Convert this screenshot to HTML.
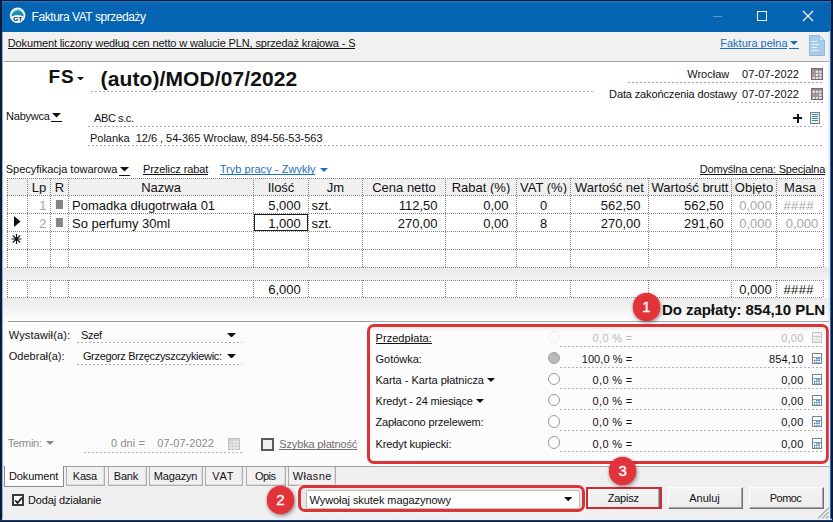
<!DOCTYPE html>
<html><head><meta charset="utf-8"><title>Faktura VAT sprzedaży</title><style>
html,body{margin:0;padding:0}
body{width:833px;height:522px;position:relative;overflow:hidden;background:#f0f0f0;font-family:"Liberation Sans",sans-serif}
body>div,body>span,body>svg{position:absolute;display:block}
.t{white-space:pre;line-height:1}
.hd{height:1px;background:repeating-linear-gradient(90deg,var(--c) 0 2px,transparent 2px 4px)}
.vd{width:1px;background:repeating-linear-gradient(180deg,var(--c) 0 1px,transparent 1px 2px)}
.hdd{height:1px;background:repeating-linear-gradient(90deg,var(--c) 0 1px,transparent 1px 2px)}
</style></head><body>
<div style="left:0px;top:0px;width:833px;height:522px;background:#f0f0f0"></div>
<div style="left:0px;top:0px;width:833px;height:31.5px;background:linear-gradient(#2a78bf 1px,#0f6ab8 2.5px,#0565b3 4px)"></div>
<div style="left:2px;top:31.5px;width:828px;height:29.5px;background:#f1f1f1"></div>
<div style="left:2px;top:61px;width:828px;height:1px;background:#a5a5a5"></div>
<div style="left:2px;top:62px;width:828px;height:205px;background:#fff"></div>
<div style="left:2px;top:267px;width:828px;height:13px;background:linear-gradient(#eaeaea,#f1f1f1)"></div>
<div style="left:2px;top:280px;width:828px;height:18px;background:#fff"></div>
<div style="left:2px;top:298px;width:828px;height:23px;background:linear-gradient(#ebebeb,#fdfdfd)"></div>
<div style="left:8px;top:321px;width:821px;height:1px;background:#9c9c9c"></div>
<div style="left:2px;top:322px;width:828px;height:145px;background:#fcfcfc"></div>
<svg style="left:9px;top:7px" width="17" height="17" viewBox="0 0 17 17"><circle cx="8.6" cy="8.3" r="7.8" fill="#f2f9fc"/><path d="M2.3 9.6A6.3 6.3 0 0 1 14.9 9.6Q8.6 6.6 2.3 9.6Z" fill="#1d8fb0"/><path d="M3.4 6.4A6.3 6.3 0 0 1 12.6 3.6Q7.6 3.4 3.4 6.4Z" fill="#49b9cf"/><text x="3.9" y="13.7" font-family="Liberation Sans" font-weight="bold" font-size="5.9" textLength="9.6" lengthAdjust="spacingAndGlyphs" fill="#16233a">GT</text></svg>
<span class="t" id="t11" style="top:10.74px;font-size:12px;color:#fff;letter-spacing:-0.450px;left:31.599999999999998px;">Faktura VAT sprzedaży</span>
<div style="left:713px;top:16px;width:9px;height:1px;background:#5b95cc"></div>
<div style="left:757px;top:11px;width:10px;height:10px;border:1px solid #fff;box-sizing:border-box"></div>
<svg style="left:802px;top:10px" width="12" height="12" viewBox="0 0 12 12"><path d="M1 1L11 11M11 1L1 11" stroke="#fff" stroke-width="1.2" fill="none"/></svg>
<span class="t" id="t15" style="top:38.00px;font-size:11px;color:#111;letter-spacing:-0.138px;left:7.8px;">Dokument liczony według cen netto w walucie PLN, sprzedaż krajowa - S</span>
<span class="t" id="t16" style="top:38.00px;font-size:11px;color:#1c6fb8;letter-spacing:-0.005px;left:720.3px;">Faktura pełna</span>
<svg style="left:790px;top:41px" width="8" height="4" viewBox="0 0 8 4"><path d="M0 0H8L4.0 4Z" fill="#1c6fb8"/></svg>
<div style="left:789px;top:48px;width:10px;height:1px;background:#1c6fb8"></div>
<svg style="left:808px;top:34px" width="18" height="23" viewBox="0 0 18 23"><path d="M1.5 1.5H11.5L16.5 6.5V21.5H1.5Z" fill="#a9cbea" stroke="#8fb8df" stroke-width="1"/><path d="M11.5 1.5V6.5H16.5Z" fill="#d5e6f5" stroke="#8fb8df" stroke-width=".8"/><path d="M3.5 7.5H9M3.5 10.5H11M3.5 13.5H9M3.5 16.5H11" stroke="#eaf3fb" stroke-width="1.2"/></svg>
<span class="t" id="t20" style="top:67.42px;font-size:19px;color:#111;font-weight:bold;letter-spacing:0.919px;left:48.5px;">FS</span>
<svg style="left:77px;top:76.5px" width="7" height="3.5" viewBox="0 0 7 3.5"><path d="M0 0H7L3.5 3.5Z" fill="#111"/></svg>
<span class="t" id="t22" style="top:68.02px;font-size:21px;color:#111;font-weight:bold;letter-spacing:0.101px;left:100.6px;">(auto)/MOD/07/2022</span>
<div class="hd" style="left:91px;top:91px;width:503px;--c:#acacac"></div>
<span class="t" id="t24" style="top:69.00px;font-size:11px;color:#111;letter-spacing:-0.014px;left:687.3px;">Wrocław</span>
<span class="t" id="t25" style="top:69.00px;font-size:11px;color:#111;letter-spacing:0.080px;left:742.0px;">07-07-2022</span>
<div class="hd" style="left:628px;top:82px;width:196px;--c:#acacac"></div>
<span class="t" id="t27" style="top:89.00px;font-size:11px;color:#111;letter-spacing:-0.129px;left:609.0999999999999px;">Data zakończenia dostawy</span>
<span class="t" id="t28" style="top:89.00px;font-size:11px;color:#111;letter-spacing:0.080px;left:742.0px;">07-07-2022</span>
<div class="hd" style="left:737px;top:102px;width:87px;--c:#acacac"></div>
<svg style="left:811px;top:68px" width="12" height="12" viewBox="0 0 12 12"><rect x=".5" y=".5" width="11" height="11" fill="#8f8f8f" stroke="#6e6e6e"/><rect x="1.6" y="2.70" width="2.3" height="2.1" fill="#d29a74"/><rect x="1.6" y="5.75" width="2.3" height="2.1" fill="#d29a74"/><rect x="1.6" y="8.80" width="2.3" height="2.1" fill="#e7e7e7"/><rect x="4.9" y="2.70" width="2.3" height="2.1" fill="#e7e7e7"/><rect x="4.9" y="5.75" width="2.3" height="2.1" fill="#e7e7e7"/><rect x="4.9" y="8.80" width="2.3" height="2.1" fill="#e7e7e7"/><rect x="8.2" y="2.70" width="2.3" height="2.1" fill="#e7e7e7"/><rect x="8.2" y="5.75" width="2.3" height="2.1" fill="#e7e7e7"/><rect x="8.2" y="8.80" width="2.3" height="2.1" fill="#e7e7e7"/></svg>
<svg style="left:811px;top:88px" width="12" height="12" viewBox="0 0 12 12"><rect x=".5" y=".5" width="11" height="11" fill="#8f8f8f" stroke="#6e6e6e"/><rect x="1.6" y="2.70" width="2.3" height="2.1" fill="#e7e7e7"/><rect x="1.6" y="5.75" width="2.3" height="2.1" fill="#d38d8d"/><rect x="1.6" y="8.80" width="2.3" height="2.1" fill="#e7e7e7"/><rect x="4.9" y="2.70" width="2.3" height="2.1" fill="#e7e7e7"/><rect x="4.9" y="5.75" width="2.3" height="2.1" fill="#d38d8d"/><rect x="4.9" y="8.80" width="2.3" height="2.1" fill="#e7e7e7"/><rect x="8.2" y="2.70" width="2.3" height="2.1" fill="#e7e7e7"/><rect x="8.2" y="5.75" width="2.3" height="2.1" fill="#e7e7e7"/><rect x="8.2" y="8.80" width="2.3" height="2.1" fill="#e7e7e7"/></svg>
<span class="t" id="t32" style="top:111.00px;font-size:11px;color:#111;letter-spacing:-0.225px;left:6.1px;">Nabywca</span>
<svg style="left:52px;top:113px" width="9" height="4.5" viewBox="0 0 9 4.5"><path d="M0 0H9L4.5 4.5Z" fill="#111"/></svg>
<div style="left:51px;top:121px;width:11px;height:1px;background:#111"></div>
<span class="t" id="t35" style="top:113.00px;font-size:11px;color:#111;letter-spacing:-0.414px;left:94.1px;">ABC s.c.</span>
<div class="hd" style="left:88px;top:126px;width:736px;--c:#acacac"></div>
<span class="t" id="t37" style="top:133.00px;font-size:11px;color:#111;letter-spacing:-0.020px;left:90.0px;">Polanka  12/6 , 54-365 Wrocław, 894-56-53-563</span>
<div class="hd" style="left:88px;top:145px;width:736px;--c:#acacac"></div>
<div style="left:793px;top:117px;width:9px;height:2px;background:#111"></div>
<div style="left:796.5px;top:113.5px;width:2px;height:9px;background:#111"></div>
<svg style="left:810px;top:112px" width="10" height="12" viewBox="0 0 10 12"><rect x=".5" y=".5" width="9" height="11" fill="#eef1f3" stroke="#7c7c7c"/><path d="M2 2.5H8M2 4.5H8M2 6.5H8M2 8.5H8" stroke="#3d86a3" stroke-width="1"/></svg>
<span class="t" id="t42" style="top:164.00px;font-size:11px;color:#111;letter-spacing:-0.020px;left:5.8px;">Specyfikacja towarowa</span>
<svg style="left:119.5px;top:167px" width="9" height="4.5" viewBox="0 0 9 4.5"><path d="M0 0H9L4.5 4.5Z" fill="#111"/></svg>
<div style="left:118.5px;top:175px;width:11px;height:1px;background:#111"></div>
<span class="t" id="t45" style="top:164.00px;font-size:11px;color:#111;letter-spacing:-0.103px;left:143.0px;">Przelicz rabat</span>
<span class="t" id="t46" style="top:164.00px;font-size:11px;color:#1c6fb8;letter-spacing:0.048px;left:219.70000000000002px;">Tryb pracy - Zwykły</span>
<svg style="left:319.5px;top:167.5px" width="8" height="4" viewBox="0 0 8 4"><path d="M0 0H8L4.0 4Z" fill="#1c6fb8"/></svg>
<span class="t" id="t48" style="top:164.00px;font-size:11px;color:#111;letter-spacing:-0.202px;left:699.8px;">Domyślna cena: Specjalna</span>
<div style="left:7px;top:178px;width:816px;height:17px;background:#f0f0f0"></div>
<div class="hdd" style="left:7px;top:178px;width:816px;--c:#858585"></div>
<div class="hdd" style="left:7px;top:195px;width:816px;--c:#858585"></div>
<div class="hdd" style="left:7px;top:213px;width:816px;--c:#858585"></div>
<div class="hdd" style="left:7px;top:231px;width:816px;--c:#858585"></div>
<div class="hdd" style="left:7px;top:249px;width:816px;--c:#858585"></div>
<div class="hdd" style="left:7px;top:267px;width:816px;--c:#858585"></div>
<div class="vd" style="left:7px;top:178px;height:90px;--c:#858585"></div>
<div class="vd" style="left:27px;top:178px;height:90px;--c:#858585"></div>
<div class="vd" style="left:50px;top:178px;height:90px;--c:#858585"></div>
<div class="vd" style="left:68px;top:178px;height:90px;--c:#858585"></div>
<div class="vd" style="left:253px;top:178px;height:90px;--c:#858585"></div>
<div class="vd" style="left:308px;top:178px;height:90px;--c:#858585"></div>
<div class="vd" style="left:362px;top:178px;height:90px;--c:#858585"></div>
<div class="vd" style="left:445px;top:178px;height:90px;--c:#858585"></div>
<div class="vd" style="left:516px;top:178px;height:90px;--c:#858585"></div>
<div class="vd" style="left:570px;top:178px;height:90px;--c:#858585"></div>
<div class="vd" style="left:648px;top:178px;height:90px;--c:#858585"></div>
<div class="vd" style="left:731px;top:178px;height:90px;--c:#858585"></div>
<div class="vd" style="left:776px;top:178px;height:90px;--c:#858585"></div>
<div class="vd" style="left:823px;top:178px;height:90px;--c:#858585"></div>
<div class="hdd" style="left:7px;top:280px;width:816px;--c:#858585"></div>
<div class="hdd" style="left:7px;top:297px;width:816px;--c:#858585"></div>
<div class="vd" style="left:7px;top:280px;height:18px;--c:#858585"></div>
<div class="vd" style="left:27px;top:280px;height:18px;--c:#858585"></div>
<div class="vd" style="left:50px;top:280px;height:18px;--c:#858585"></div>
<div class="vd" style="left:68px;top:280px;height:18px;--c:#858585"></div>
<div class="vd" style="left:253px;top:280px;height:18px;--c:#858585"></div>
<div class="vd" style="left:308px;top:280px;height:18px;--c:#858585"></div>
<div class="vd" style="left:362px;top:280px;height:18px;--c:#858585"></div>
<div class="vd" style="left:445px;top:280px;height:18px;--c:#858585"></div>
<div class="vd" style="left:516px;top:280px;height:18px;--c:#858585"></div>
<div class="vd" style="left:570px;top:280px;height:18px;--c:#858585"></div>
<div class="vd" style="left:648px;top:280px;height:18px;--c:#858585"></div>
<div class="vd" style="left:731px;top:280px;height:18px;--c:#858585"></div>
<div class="vd" style="left:776px;top:280px;height:18px;--c:#858585"></div>
<div class="vd" style="left:823px;top:280px;height:18px;--c:#858585"></div>
<span class="t" style="left:28px;width:22px;text-align:center;top:180.50px;font-size:13px;color:#111;overflow:hidden">Lp</span>
<span class="t" style="left:51px;width:17px;text-align:center;top:180.50px;font-size:13px;color:#111;overflow:hidden">R</span>
<span class="t" style="left:69px;width:184px;text-align:center;top:180.50px;font-size:13px;color:#111;overflow:hidden">Nazwa</span>
<span class="t" style="left:254px;width:54px;text-align:center;top:180.50px;font-size:13px;color:#111;overflow:hidden">Ilość</span>
<span class="t" style="left:309px;width:53px;text-align:center;top:180.50px;font-size:13px;color:#111;overflow:hidden">Jm</span>
<span class="t" style="left:363px;width:82px;text-align:center;top:180.50px;font-size:13px;color:#111;overflow:hidden">Cena netto</span>
<span class="t" style="left:446px;width:70px;text-align:center;top:180.50px;font-size:13px;color:#111;overflow:hidden">Rabat (%)</span>
<span class="t" style="left:517px;width:53px;text-align:center;top:180.50px;font-size:13px;color:#111;overflow:hidden">VAT (%)</span>
<span class="t" style="left:571px;width:77px;text-align:center;top:180.50px;font-size:13px;color:#111;overflow:hidden">Wartość net</span>
<span class="t" style="left:649px;width:82px;text-align:center;top:180.50px;font-size:13px;color:#111;overflow:hidden">Wartość brutt</span>
<span class="t" style="left:732px;width:44px;text-align:center;top:180.50px;font-size:13px;color:#111;overflow:hidden">Objęto</span>
<span class="t" style="left:777px;width:46px;text-align:center;top:180.50px;font-size:13px;color:#111;overflow:hidden">Masa</span>
<span class="t" style="right:786.5px;top:198.80px;font-size:13px;color:#a6a6a6">1</span>
<span class="t" style="right:786.5px;top:216.60px;font-size:13px;color:#a6a6a6">2</span>
<div style="left:56px;top:200px;width:7px;height:9px;background:#858585"></div>
<div style="left:56px;top:218px;width:7px;height:9px;background:#858585"></div>
<span class="t" style="left:72px;top:198.80px;font-size:13px;color:#111">Pomadka długotrwała 01</span>
<span class="t" style="left:72px;top:216.60px;font-size:13px;color:#111">So perfumy 30ml</span>
<span class="t" style="right:532.3px;top:198.80px;font-size:13px;color:#111">5,000</span>
<span class="t" style="right:532.3px;top:216.60px;font-size:13px;color:#111">1,000</span>
<span class="t" style="right:532.3px;top:282.60px;font-size:13px;color:#111">6,000</span>
<span class="t" style="left:311.5px;top:198.80px;font-size:13px;color:#111">szt.</span>
<span class="t" style="left:311.5px;top:216.60px;font-size:13px;color:#111">szt.</span>
<span class="t" style="right:395.5px;top:198.80px;font-size:13px;color:#111">112,50</span>
<span class="t" style="right:395.5px;top:216.60px;font-size:13px;color:#111">270,00</span>
<span class="t" style="right:324.5px;top:198.80px;font-size:13px;color:#111">0,00</span>
<span class="t" style="right:324.5px;top:216.60px;font-size:13px;color:#111">0,00</span>
<span class="t" style="left:517px;width:53px;text-align:center;top:198.80px;font-size:13px;color:#111;overflow:hidden">0</span>
<span class="t" style="left:517px;width:53px;text-align:center;top:216.60px;font-size:13px;color:#111;overflow:hidden">8</span>
<span class="t" style="right:192.5px;top:198.80px;font-size:13px;color:#111">562,50</span>
<span class="t" style="right:192.5px;top:216.60px;font-size:13px;color:#111">270,00</span>
<span class="t" style="right:109.29999999999995px;top:198.80px;font-size:13px;color:#111">562,50</span>
<span class="t" style="right:109.29999999999995px;top:216.60px;font-size:13px;color:#111">291,60</span>
<span class="t" style="right:61.299999999999955px;top:198.80px;font-size:13px;color:#a6a6a6">0,000</span>
<span class="t" style="right:61.299999999999955px;top:216.60px;font-size:13px;color:#a6a6a6">0,000</span>
<span class="t" style="right:61.299999999999955px;top:282.60px;font-size:13px;color:#111">0,000</span>
<span class="t" style="left:783.4px;top:198.80px;font-size:13px;color:#a6a6a6"><span style="letter-spacing:.4px">####</span></span>
<span class="t" style="right:14.799999999999955px;top:216.60px;font-size:13px;color:#a6a6a6">0,000</span>
<span class="t" style="left:783.4px;top:282.60px;font-size:13px;color:#111"><span style="letter-spacing:.4px">####</span></span>
<div style="left:254px;top:214px;width:54px;height:17px;border:1px solid #222;box-sizing:border-box"></div>
<svg style="left:14px;top:216px" width="7" height="11" viewBox="0 0 7 11"><path d="M0 0L6.5 5.5L0 11Z" fill="#111"/></svg>
<svg style="left:11px;top:234px" width="11" height="10" viewBox="0 0 11 10"><path d="M5.5 0V10M0.5 5H10.5M1.8 1.5L9.2 8.5M9.2 1.5L1.8 8.5" stroke="#111" stroke-width="1.1"/></svg>
<span class="t" id="t128" style="top:301.70px;font-size:15px;color:#111;font-weight:bold;letter-spacing:-0.044px;left:661.9px;">Do zapłaty: 854,10 PLN</span>
<span class="t" id="t129" style="top:330.00px;font-size:11px;color:#111;letter-spacing:0.155px;left:8.700000000000001px;">Wystawił(a):</span>
<span class="t" id="t130" style="top:330.00px;font-size:11px;color:#111;letter-spacing:-0.372px;left:81.1px;">Szef</span>
<svg style="left:226.8px;top:332.6px" width="9" height="4.6" viewBox="0 0 9 4.6"><path d="M0 0H9L4.5 4.6Z" fill="#111"/></svg>
<div class="hd" style="left:77px;top:342px;width:165px;--c:#acacac"></div>
<span class="t" id="t133" style="top:351.00px;font-size:11px;color:#111;letter-spacing:0.026px;left:8.700000000000001px;">Odebrał(a):</span>
<span class="t" id="t134" style="top:351.00px;font-size:11px;color:#111;letter-spacing:-0.327px;left:82.89999999999999px;">Grzegorz Brzęczyszczykiewic:</span>
<svg style="left:226.8px;top:353.6px" width="9" height="4.6" viewBox="0 0 9 4.6"><path d="M0 0H9L4.5 4.6Z" fill="#111"/></svg>
<div class="hd" style="left:77px;top:364px;width:165px;--c:#acacac"></div>
<span class="t" id="t137" style="top:438.00px;font-size:11px;color:#8a8a8a;letter-spacing:-0.294px;left:7.7px;">Termin:</span>
<svg style="left:46px;top:441px" width="8" height="4" viewBox="0 0 8 4"><path d="M0 0H8L4.0 4Z" fill="#8a8a8a"/></svg>
<span class="t" id="t139" style="top:438.00px;font-size:11px;color:#8a8a8a;letter-spacing:0.109px;left:111.0px;">0 dni =</span>
<span class="t" id="t140" style="top:438.00px;font-size:11px;color:#8a8a8a;letter-spacing:0.024px;left:157.3px;">07-07-2022</span>
<svg style="left:228px;top:438px" width="12" height="12" viewBox="0 0 12 12"><rect x=".5" y=".5" width="11" height="11" fill="#cfcfcf" stroke="#c2c2c2"/><rect x="1.6" y="2.70" width="2.3" height="2.1" fill="#dedede"/><rect x="1.6" y="5.75" width="2.3" height="2.1" fill="#dedede"/><rect x="1.6" y="8.80" width="2.3" height="2.1" fill="#eeeeee"/><rect x="4.9" y="2.70" width="2.3" height="2.1" fill="#eeeeee"/><rect x="4.9" y="5.75" width="2.3" height="2.1" fill="#eeeeee"/><rect x="4.9" y="8.80" width="2.3" height="2.1" fill="#eeeeee"/><rect x="8.2" y="2.70" width="2.3" height="2.1" fill="#eeeeee"/><rect x="8.2" y="5.75" width="2.3" height="2.1" fill="#eeeeee"/><rect x="8.2" y="8.80" width="2.3" height="2.1" fill="#eeeeee"/></svg>
<div class="hd" style="left:84px;top:452px;width:158px;--c:#b5b5b5"></div>
<div style="left:261px;top:438px;width:13px;height:13px;border:2px solid #5a5a5a;box-sizing:border-box;background:#f0f0f0"></div>
<span class="t" id="t144" style="top:439.00px;font-size:11px;color:#6e6e6e;letter-spacing:-0.151px;left:279.3px;">Szybka płatność</span>
<span class="t" id="t145" style="top:333.00px;font-size:11px;color:#111;letter-spacing:0.064px;left:375.5px;">Przedpłata:</span>
<span class="t" id="t146" style="top:333.00px;font-size:11px;color:#b9b9b9;letter-spacing:0.348px;left:592.5999999999999px;">0,0 % =</span>
<span class="t" id="t147" style="top:333.00px;font-size:11px;color:#b9b9b9;letter-spacing:0.193px;left:781.3px;">0,00</span>
<div class="hd" style="left:560px;top:346px;width:264px;--c:#b4b4b4"></div>
<div style="left:547.5px;top:330.5px;width:12.5px;height:12.5px;border-radius:50%;background:#fbfbfb;border:1px solid #ededed;box-sizing:border-box"></div>
<svg style="left:812px;top:332.4px" width="10" height="11" viewBox="0 0 10 11"><rect x=".5" y=".5" width="9" height="10" fill="#f3f3f3" stroke="#c4c4c4"/><path d="M1 4.5H9" stroke="#c4c4c4" stroke-width=".8"/><path d="M4.2 5.6H8.4M2 7.4H8.4M2 9.2H8.4" stroke="#d9d9d9" stroke-width="1.1" stroke-dasharray="1.4 .8"/></svg>
<span class="t" id="t151" style="top:354.00px;font-size:11px;color:#111;letter-spacing:-0.024px;left:375.5px;">Gotówka:</span>
<span class="t" id="t152" style="top:354.00px;font-size:11px;color:#111;letter-spacing:0.095px;left:581.6999999999999px;">100,0 % =</span>
<span class="t" id="t153" style="top:354.00px;font-size:11px;color:#111;letter-spacing:0.129px;left:769.0px;">854,10</span>
<div class="hd" style="left:560px;top:367px;width:264px;--c:#b4b4b4"></div>
<div style="left:547.5px;top:351.6px;width:12.5px;height:12.5px;border-radius:50%;background:#b9b9b9;border:1.2px solid #a2a2a2;box-sizing:border-box"></div>
<svg style="left:812px;top:353.4px" width="10" height="11" viewBox="0 0 10 11"><rect x=".5" y=".5" width="9" height="10" fill="#ffffff" stroke="#6d8796"/><path d="M1 4.5H9" stroke="#6d8796" stroke-width=".8"/><path d="M4.2 5.6H8.4M2 7.4H8.4M2 9.2H8.4" stroke="#2e6da3" stroke-width="1.1" stroke-dasharray="1.4 .8"/></svg>
<span class="t" id="t157" style="top:375.00px;font-size:11px;color:#111;letter-spacing:-0.016px;left:375.5px;">Karta - Karta płatnicza</span>
<span class="t" id="t158" style="top:375.00px;font-size:11px;color:#111;letter-spacing:0.348px;left:592.5999999999999px;">0,0 % =</span>
<span class="t" id="t159" style="top:375.00px;font-size:11px;color:#111;letter-spacing:0.193px;left:781.3px;">0,00</span>
<div class="hd" style="left:560px;top:388px;width:264px;--c:#b4b4b4"></div>
<div style="left:547.5px;top:372.8px;width:12.5px;height:12.5px;border-radius:50%;background:#fdfdfd;border:1.2px solid #9a9a9a;box-sizing:border-box"></div>
<svg style="left:812px;top:374.4px" width="10" height="11" viewBox="0 0 10 11"><rect x=".5" y=".5" width="9" height="10" fill="#ffffff" stroke="#6d8796"/><path d="M1 4.5H9" stroke="#6d8796" stroke-width=".8"/><path d="M4.2 5.6H8.4M2 7.4H8.4M2 9.2H8.4" stroke="#2e6da3" stroke-width="1.1" stroke-dasharray="1.4 .8"/></svg>
<span class="t" id="t163" style="top:396.00px;font-size:11px;color:#111;letter-spacing:-0.146px;left:375.5px;">Kredyt - 24 miesiące</span>
<span class="t" id="t164" style="top:396.00px;font-size:11px;color:#111;letter-spacing:0.348px;left:592.5999999999999px;">0,0 % =</span>
<span class="t" id="t165" style="top:396.00px;font-size:11px;color:#111;letter-spacing:0.193px;left:781.3px;">0,00</span>
<div class="hd" style="left:560px;top:409px;width:264px;--c:#b4b4b4"></div>
<div style="left:547.5px;top:393.9px;width:12.5px;height:12.5px;border-radius:50%;background:#fdfdfd;border:1.2px solid #9a9a9a;box-sizing:border-box"></div>
<svg style="left:812px;top:395.4px" width="10" height="11" viewBox="0 0 10 11"><rect x=".5" y=".5" width="9" height="10" fill="#ffffff" stroke="#6d8796"/><path d="M1 4.5H9" stroke="#6d8796" stroke-width=".8"/><path d="M4.2 5.6H8.4M2 7.4H8.4M2 9.2H8.4" stroke="#2e6da3" stroke-width="1.1" stroke-dasharray="1.4 .8"/></svg>
<span class="t" id="t169" style="top:417.00px;font-size:11px;color:#111;letter-spacing:-0.141px;left:375.5px;">Zapłacono przelewem:</span>
<span class="t" id="t170" style="top:417.00px;font-size:11px;color:#111;letter-spacing:0.348px;left:592.5999999999999px;">0,0 % =</span>
<span class="t" id="t171" style="top:417.00px;font-size:11px;color:#111;letter-spacing:0.193px;left:781.3px;">0,00</span>
<div class="hd" style="left:560px;top:430px;width:264px;--c:#b4b4b4"></div>
<div style="left:547.5px;top:415.0px;width:12.5px;height:12.5px;border-radius:50%;background:#fdfdfd;border:1.2px solid #9a9a9a;box-sizing:border-box"></div>
<svg style="left:812px;top:416.4px" width="10" height="11" viewBox="0 0 10 11"><rect x=".5" y=".5" width="9" height="10" fill="#ffffff" stroke="#6d8796"/><path d="M1 4.5H9" stroke="#6d8796" stroke-width=".8"/><path d="M4.2 5.6H8.4M2 7.4H8.4M2 9.2H8.4" stroke="#2e6da3" stroke-width="1.1" stroke-dasharray="1.4 .8"/></svg>
<span class="t" id="t175" style="top:439.00px;font-size:11px;color:#111;letter-spacing:-0.110px;left:375.5px;">Kredyt kupiecki:</span>
<span class="t" id="t176" style="top:439.00px;font-size:11px;color:#111;letter-spacing:0.348px;left:592.5999999999999px;">0,0 % =</span>
<span class="t" id="t177" style="top:439.00px;font-size:11px;color:#111;letter-spacing:0.193px;left:781.3px;">0,00</span>
<div class="hd" style="left:560px;top:451px;width:264px;--c:#b4b4b4"></div>
<div style="left:547.5px;top:436.1px;width:12.5px;height:12.5px;border-radius:50%;background:#fdfdfd;border:1.2px solid #9a9a9a;box-sizing:border-box"></div>
<svg style="left:812px;top:438.4px" width="10" height="11" viewBox="0 0 10 11"><rect x=".5" y=".5" width="9" height="10" fill="#ffffff" stroke="#6d8796"/><path d="M1 4.5H9" stroke="#6d8796" stroke-width=".8"/><path d="M4.2 5.6H8.4M2 7.4H8.4M2 9.2H8.4" stroke="#2e6da3" stroke-width="1.1" stroke-dasharray="1.4 .8"/></svg>
<svg style="left:486.5px;top:377.5px" width="8" height="4" viewBox="0 0 8 4"><path d="M0 0H8L4.0 4Z" fill="#111"/></svg>
<svg style="left:475.5px;top:398.7px" width="8" height="4" viewBox="0 0 8 4"><path d="M0 0H8L4.0 4Z" fill="#111"/></svg>
<div style="left:2px;top:467px;width:828px;height:53px;background:#f0f0f0"></div>
<div style="left:2px;top:466px;width:828px;height:1px;background:#9d9d9d"></div>
<div style="left:4px;top:466px;width:60px;height:20.5px;background:#fcfcfc;border:1px solid #8a8a8a;border-top:none;box-sizing:border-box"></div>
<div style="left:5px;top:465px;width:58px;height:2px;background:#fcfcfc"></div>
<span class="t" id="t187" style="top:471.00px;font-size:11px;color:#111;letter-spacing:-0.120px;left:9.0px;">Dokument</span>
<div style="left:66px;top:467px;width:39px;height:19px;background:#f1f1f1;border:1px solid #adadad;border-top:none;box-sizing:border-box;box-shadow:inset -1px -1px 0 #dcdcdc"></div>
<span class="t" id="t189" style="top:471.00px;font-size:11px;color:#111;letter-spacing:-0.226px;left:72.8px;">Kasa</span>
<div style="left:108px;top:467px;width:39px;height:19px;background:#f1f1f1;border:1px solid #adadad;border-top:none;box-sizing:border-box;box-shadow:inset -1px -1px 0 #dcdcdc"></div>
<span class="t" id="t191" style="top:471.00px;font-size:11px;color:#111;letter-spacing:-0.193px;left:113.8px;">Bank</span>
<div style="left:149px;top:467px;width:54px;height:19px;background:#f1f1f1;border:1px solid #adadad;border-top:none;box-sizing:border-box;box-shadow:inset -1px -1px 0 #dcdcdc"></div>
<span class="t" id="t193" style="top:471.00px;font-size:11px;color:#111;letter-spacing:-0.157px;left:153.8px;">Magazyn</span>
<div style="left:205px;top:467px;width:38px;height:19px;background:#f1f1f1;border:1px solid #adadad;border-top:none;box-sizing:border-box;box-shadow:inset -1px -1px 0 #dcdcdc"></div>
<span class="t" id="t195" style="top:471.00px;font-size:11px;color:#111;letter-spacing:0.717px;left:212.3px;">VAT</span>
<div style="left:246px;top:467px;width:40px;height:19px;background:#f1f1f1;border:1px solid #adadad;border-top:none;box-sizing:border-box;box-shadow:inset -1px -1px 0 #dcdcdc"></div>
<span class="t" id="t197" style="top:471.00px;font-size:11px;color:#111;letter-spacing:-0.508px;left:254.9px;">Opis</span>
<div style="left:288px;top:467px;width:48px;height:19px;background:#f1f1f1;border:1px solid #adadad;border-top:none;box-sizing:border-box;box-shadow:inset -1px -1px 0 #dcdcdc"></div>
<span class="t" id="t199" style="top:471.00px;font-size:11px;color:#111;letter-spacing:0.383px;left:292.7px;">Własne</span>
<div style="left:12px;top:494px;width:12px;height:12px;border:2px solid #3c3c3c;box-sizing:border-box;background:#fff"></div>
<svg style="left:11.5px;top:493.5px" width="13" height="13" viewBox="0 0 13 13"><path d="M3.2 6.3L5.6 9L9.8 3.8" stroke="#111" stroke-width="1.7" fill="none"/></svg>
<span class="t" id="t202" style="top:495.00px;font-size:11px;color:#111;letter-spacing:-0.130px;left:28.0px;">Dodaj działanie</span>
<div style="left:299px;top:487px;width:284px;height:24px;background:#e8e8e8;border-radius:5px"></div>
<div style="left:305.5px;top:489.5px;width:274px;height:19.5px;background:#fff;border:1px solid #bdbdbd;box-sizing:border-box;border-radius:2px"></div>
<span class="t" id="t205" style="top:495.00px;font-size:11px;color:#111;letter-spacing:-0.061px;left:309.5px;">Wywołaj skutek magazynowy</span>
<svg style="left:563.5px;top:497.4px" width="8.4" height="4.2" viewBox="0 0 8.4 4.2"><path d="M0 0H8.4L4.2 4.2Z" fill="#111"/></svg>
<div style="left:589px;top:487px;width:71px;height:22px;background:linear-gradient(#f4f4f4,#ececec);box-sizing:border-box;border:1px solid;border-color:#fff #6f6f6f #6f6f6f #fff;box-shadow:inset -1px -1px 0 #a8a8a8"></div>
<span class="t" id="t208" style="top:493.00px;font-size:11px;color:#111;letter-spacing:-0.221px;left:607.6999999999999px;">Zapisz</span>
<div style="left:668px;top:487px;width:75px;height:22px;background:linear-gradient(#f4f4f4,#ececec);box-sizing:border-box;border:1px solid;border-color:#fff #6f6f6f #6f6f6f #fff;box-shadow:inset -1px -1px 0 #a8a8a8"></div>
<span class="t" id="t210" style="top:493.00px;font-size:11px;color:#111;letter-spacing:-0.016px;left:689.3px;">Anuluj</span>
<div style="left:749px;top:487px;width:75px;height:22px;background:linear-gradient(#f4f4f4,#ececec);box-sizing:border-box;border:1px solid;border-color:#fff #6f6f6f #6f6f6f #fff;box-shadow:inset -1px -1px 0 #a8a8a8"></div>
<span class="t" id="t212" style="top:493.00px;font-size:11px;color:#111;letter-spacing:-0.562px;left:769.8px;">Pomoc</span>
<div style="left:367.3px;top:323.6px;width:461.5px;height:140.5px;border:3px solid #df3237;border-radius:7px;box-sizing:border-box;box-shadow:0 0 3px 1px rgba(255,255,255,.85),inset 0 0 3px 1px rgba(255,255,255,.6),inset 0 2px 3px rgba(0,0,0,.10)"></div>
<div style="left:297.7px;top:485.3px;width:287px;height:27.2px;border:3px solid #df3237;border-radius:7px;box-sizing:border-box;box-shadow:0 0 3px 1px rgba(255,255,255,.8),inset 0 0 2px rgba(255,255,255,.4)"></div>
<div style="left:586px;top:486.7px;width:76px;height:22.6px;border:2.7px solid #d32b31;box-sizing:border-box"></div>
<div style="left:632.5px;top:293.4px;width:27.6px;height:27.6px;border-radius:50%;background:#e2333a;box-shadow:0 0 1.5px #e2333a,1px 2px 4px rgba(0,0,0,.4)"></div>
<span class="t" style="left:632.5px;width:27.6px;text-align:center;top:299.2px;font-size:15px;color:#fff;-webkit-text-stroke:.35px #fff">1</span>
<div style="left:266.5px;top:486.0px;width:27.6px;height:27.6px;border-radius:50%;background:#e2333a;box-shadow:0 0 1.5px #e2333a,1px 2px 4px rgba(0,0,0,.4)"></div>
<span class="t" style="left:266.5px;width:27.6px;text-align:center;top:491.8px;font-size:15px;color:#fff;-webkit-text-stroke:.35px #fff">2</span>
<div style="left:608.9000000000001px;top:457.4px;width:27.6px;height:27.6px;border-radius:50%;background:#e2333a;box-shadow:0 0 1.5px #e2333a,1px 2px 4px rgba(0,0,0,.4)"></div>
<span class="t" style="left:608.9000000000001px;width:27.6px;text-align:center;top:463.2px;font-size:15px;color:#fff;-webkit-text-stroke:.35px #fff">3</span>
<div style="left:0px;top:0px;width:833px;height:1px;background:#0b1b3a"></div>
<div style="left:0px;top:0px;width:1.9px;height:522px;background:#0b1b3a"></div>
<div style="left:831.4px;top:0px;width:1.6px;height:522px;background:#0b1b3a"></div>
<div style="left:1.9px;top:31.5px;width:2.2px;height:488px;background:linear-gradient(90deg,#4a6f9f 0,#c4d9ee .8px,rgba(236,245,252,.6) 1.4px,rgba(240,247,253,0) 2.2px)"></div>
<div style="left:828px;top:31px;width:3.4px;height:489px;background:linear-gradient(90deg,rgba(230,242,252,0) 0,#cfe3f5 1.9px,#4576b0 2.2px,#2f5f9b 3.4px)"></div>
<div style="left:1.5px;top:518px;width:830px;height:1.7px;background:linear-gradient(rgba(235,245,253,0),#e6f2fb)"></div>
<div style="left:0px;top:519.7px;width:833px;height:2.3px;background:linear-gradient(#3a5f94,#0b1b3a 1px)"></div>
<svg style="left:817px;top:507px" width="12" height="12" viewBox="0 0 12 12"><path d="M11.5 1L1 11.5M11.5 5L5 11.5M11.5 9L9 11.5" stroke="#a9a9a9" stroke-width="1.2"/></svg>
<div style="left:7.8px;top:48px;width:347.7px;height:1px;background:#111"></div>
<div style="left:720.3px;top:48px;width:67.2px;height:1px;background:#1c6fb8"></div>
<div style="left:143.0px;top:174px;width:65.3px;height:1px;background:#111"></div>
<div style="left:219.7px;top:174px;width:95.8px;height:1px;background:#1c6fb8"></div>
<div style="left:699.8px;top:174px;width:125.6px;height:1px;background:#111"></div>
<div style="left:279.3px;top:449px;width:78.0px;height:1px;background:#6e6e6e"></div>
<div style="left:375.5px;top:343px;width:56.3px;height:1px;background:#111"></div>
</body></html>
